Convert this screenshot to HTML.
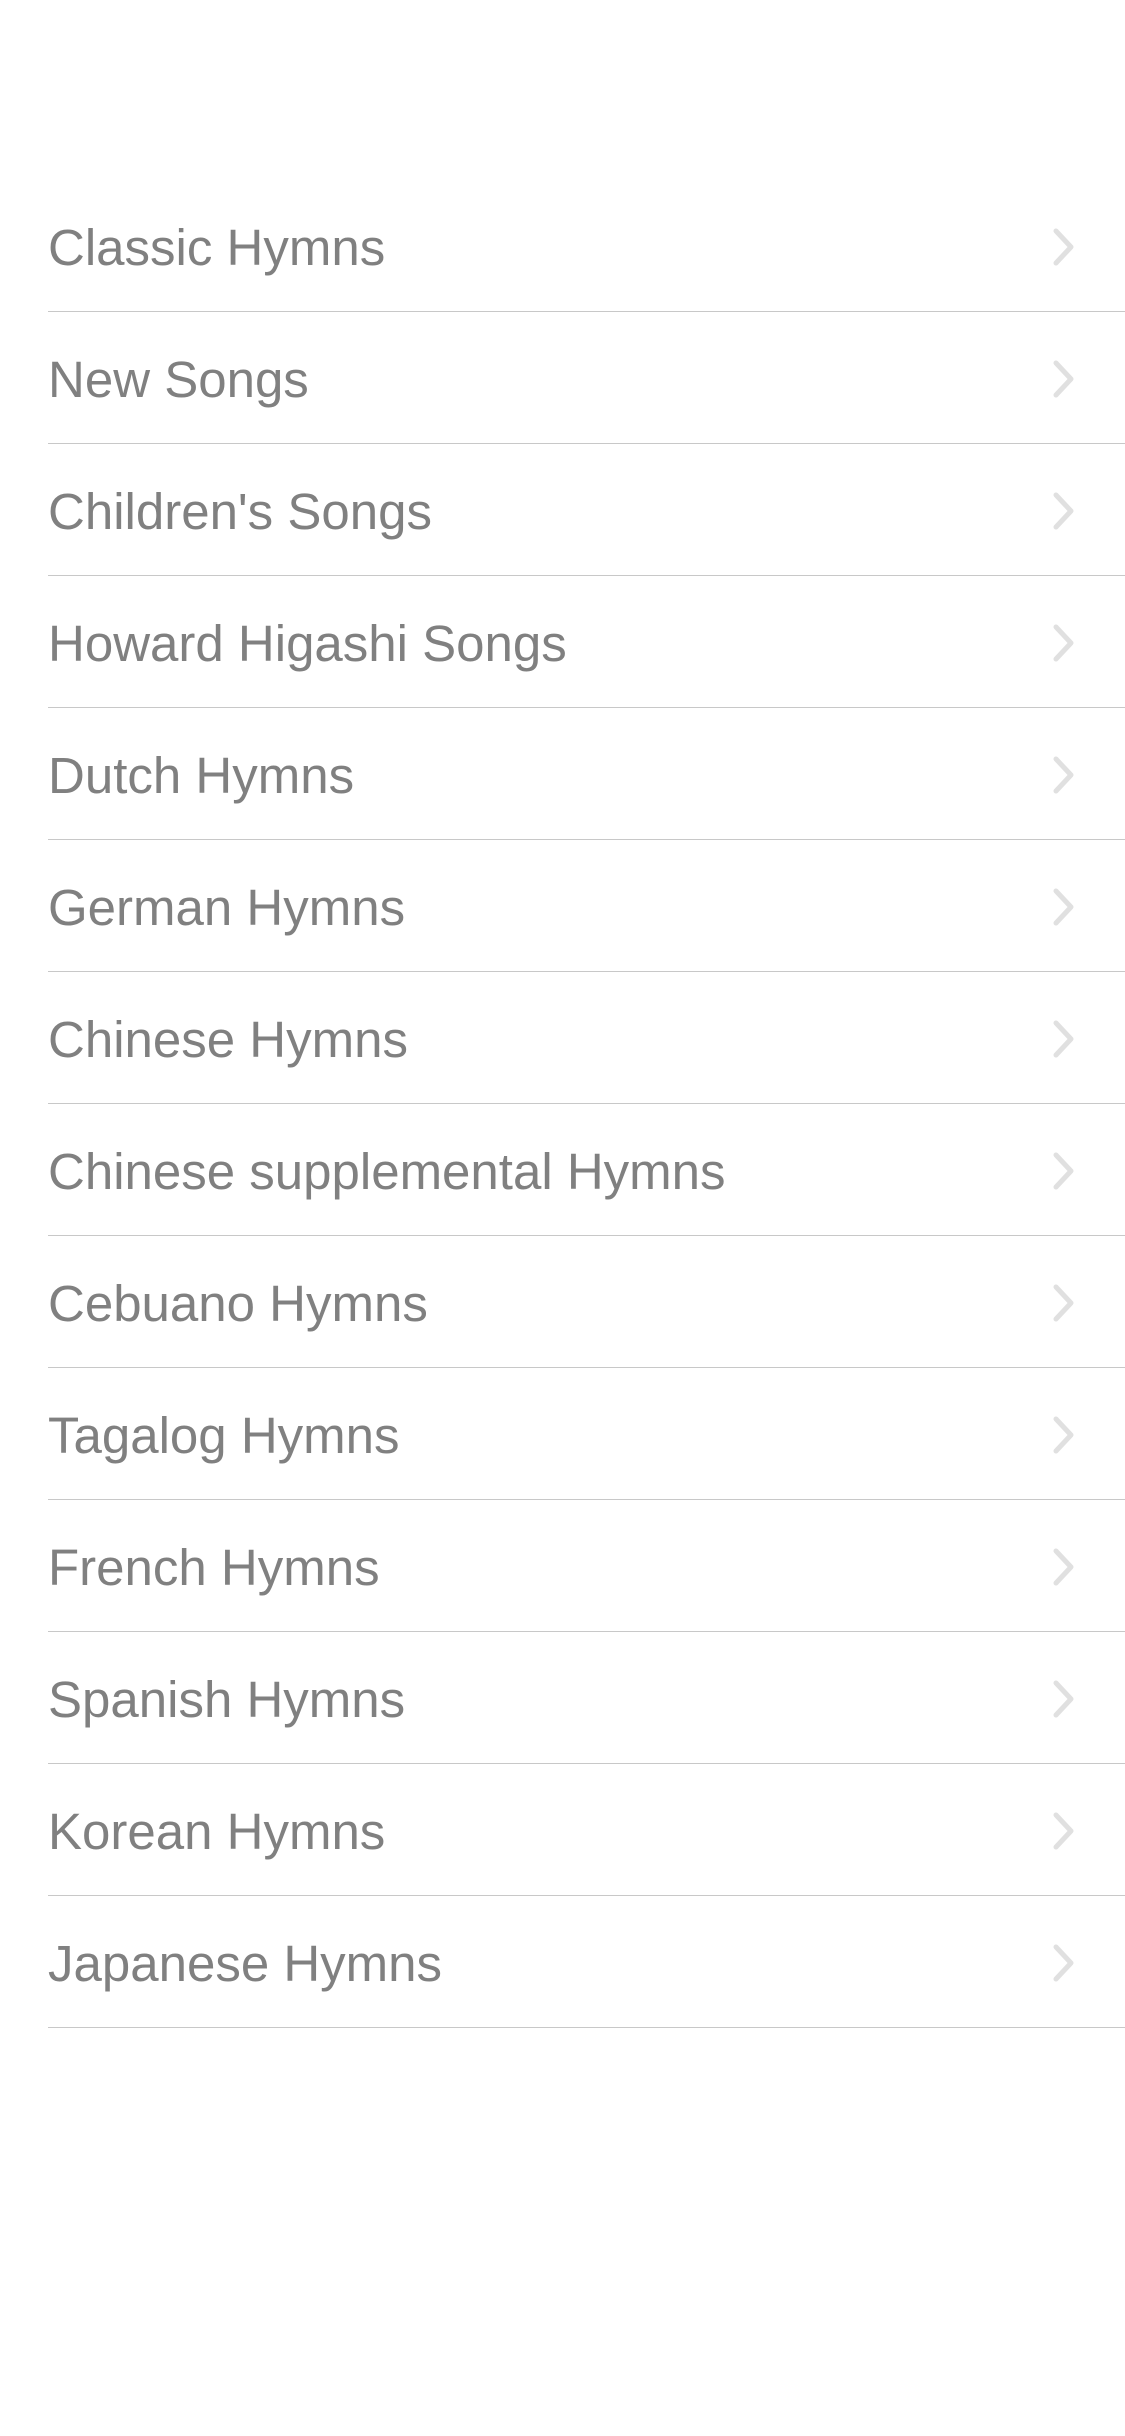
<!DOCTYPE html>
<html><head><meta charset="utf-8"><style>
html,body{margin:0;padding:0;background:#fff;width:1125px;height:2436px;overflow:hidden}
.list{position:absolute;top:180px;left:0;width:1125px}
.row{position:relative;height:131px;border-bottom:1px solid #c8c8c8;margin-left:48px}
.row span{position:absolute;left:0;top:2px;line-height:132px;font-family:"Liberation Sans",sans-serif;font-size:51px;color:#808080;white-space:nowrap}
.row svg{position:absolute;left:1005px;top:48px}
</style></head><body>
<div class="list">
<div class="row"><span>Classic Hymns</span><svg width="24" height="38" viewBox="0 0 24 38"><path d="M3 3 L18 19 L3 35" fill="none" stroke="#e0e0e0" stroke-width="5" stroke-linecap="round" stroke-linejoin="round"/></svg></div>
<div class="row"><span>New Songs</span><svg width="24" height="38" viewBox="0 0 24 38"><path d="M3 3 L18 19 L3 35" fill="none" stroke="#e0e0e0" stroke-width="5" stroke-linecap="round" stroke-linejoin="round"/></svg></div>
<div class="row"><span>Children's Songs</span><svg width="24" height="38" viewBox="0 0 24 38"><path d="M3 3 L18 19 L3 35" fill="none" stroke="#e0e0e0" stroke-width="5" stroke-linecap="round" stroke-linejoin="round"/></svg></div>
<div class="row"><span>Howard Higashi Songs</span><svg width="24" height="38" viewBox="0 0 24 38"><path d="M3 3 L18 19 L3 35" fill="none" stroke="#e0e0e0" stroke-width="5" stroke-linecap="round" stroke-linejoin="round"/></svg></div>
<div class="row"><span>Dutch Hymns</span><svg width="24" height="38" viewBox="0 0 24 38"><path d="M3 3 L18 19 L3 35" fill="none" stroke="#e0e0e0" stroke-width="5" stroke-linecap="round" stroke-linejoin="round"/></svg></div>
<div class="row"><span>German Hymns</span><svg width="24" height="38" viewBox="0 0 24 38"><path d="M3 3 L18 19 L3 35" fill="none" stroke="#e0e0e0" stroke-width="5" stroke-linecap="round" stroke-linejoin="round"/></svg></div>
<div class="row"><span>Chinese Hymns</span><svg width="24" height="38" viewBox="0 0 24 38"><path d="M3 3 L18 19 L3 35" fill="none" stroke="#e0e0e0" stroke-width="5" stroke-linecap="round" stroke-linejoin="round"/></svg></div>
<div class="row"><span>Chinese supplemental Hymns</span><svg width="24" height="38" viewBox="0 0 24 38"><path d="M3 3 L18 19 L3 35" fill="none" stroke="#e0e0e0" stroke-width="5" stroke-linecap="round" stroke-linejoin="round"/></svg></div>
<div class="row"><span>Cebuano Hymns</span><svg width="24" height="38" viewBox="0 0 24 38"><path d="M3 3 L18 19 L3 35" fill="none" stroke="#e0e0e0" stroke-width="5" stroke-linecap="round" stroke-linejoin="round"/></svg></div>
<div class="row"><span>Tagalog Hymns</span><svg width="24" height="38" viewBox="0 0 24 38"><path d="M3 3 L18 19 L3 35" fill="none" stroke="#e0e0e0" stroke-width="5" stroke-linecap="round" stroke-linejoin="round"/></svg></div>
<div class="row"><span>French Hymns</span><svg width="24" height="38" viewBox="0 0 24 38"><path d="M3 3 L18 19 L3 35" fill="none" stroke="#e0e0e0" stroke-width="5" stroke-linecap="round" stroke-linejoin="round"/></svg></div>
<div class="row"><span>Spanish Hymns</span><svg width="24" height="38" viewBox="0 0 24 38"><path d="M3 3 L18 19 L3 35" fill="none" stroke="#e0e0e0" stroke-width="5" stroke-linecap="round" stroke-linejoin="round"/></svg></div>
<div class="row"><span>Korean Hymns</span><svg width="24" height="38" viewBox="0 0 24 38"><path d="M3 3 L18 19 L3 35" fill="none" stroke="#e0e0e0" stroke-width="5" stroke-linecap="round" stroke-linejoin="round"/></svg></div>
<div class="row"><span>Japanese Hymns</span><svg width="24" height="38" viewBox="0 0 24 38"><path d="M3 3 L18 19 L3 35" fill="none" stroke="#e0e0e0" stroke-width="5" stroke-linecap="round" stroke-linejoin="round"/></svg></div>
</div>
</body></html>
